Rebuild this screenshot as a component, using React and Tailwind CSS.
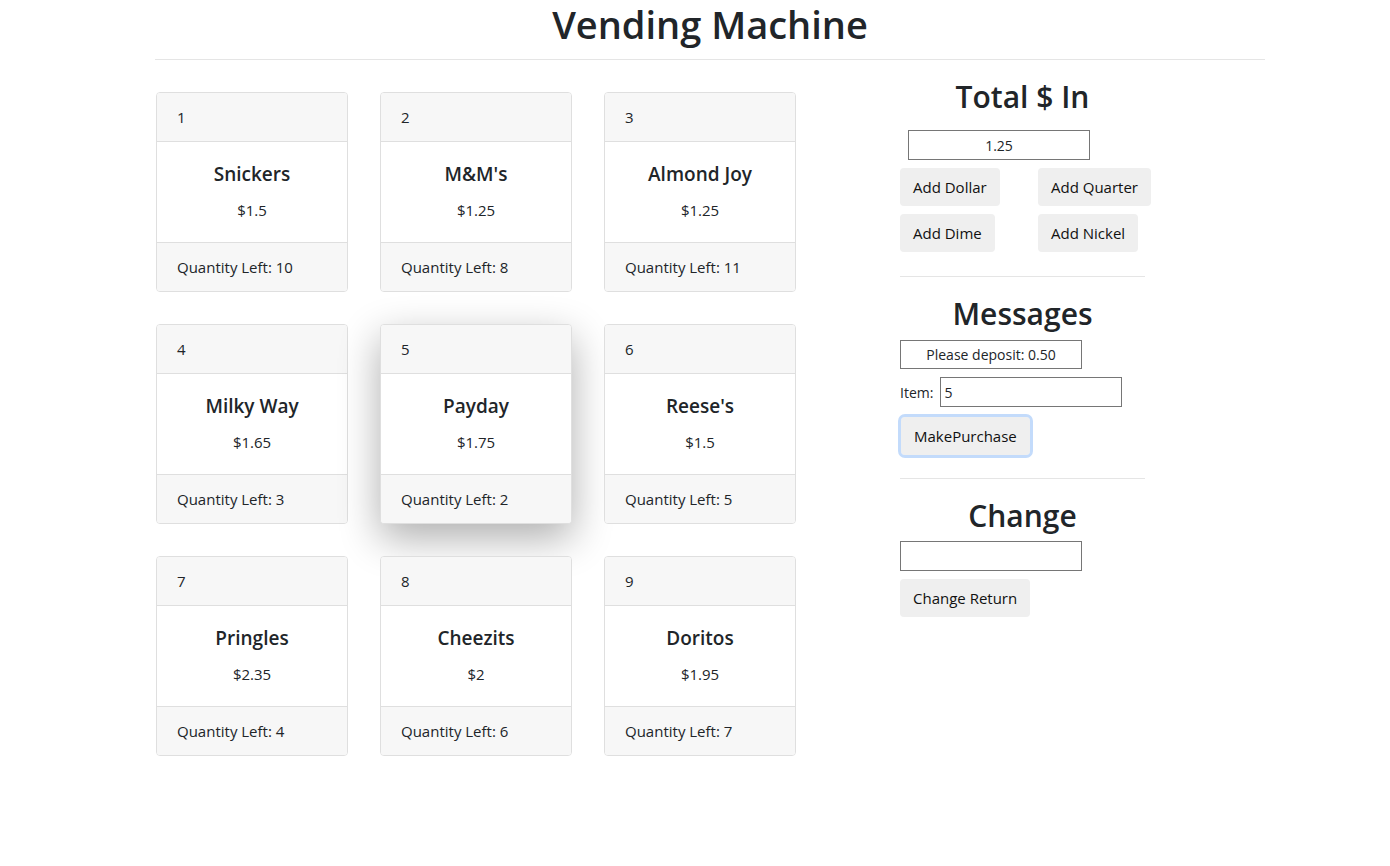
import React from "react";

const items = [
  { id: 1, name: "Snickers", price: "1.5", qty: 10 },
  { id: 2, name: "M&M's", price: "1.25", qty: 8 },
  { id: 3, name: "Almond Joy", price: "1.25", qty: 11 },
  { id: 4, name: "Milky Way", price: "1.65", qty: 3 },
  { id: 5, name: "Payday", price: "1.75", qty: 2 },
  { id: 6, name: "Reese's", price: "1.5", qty: 5 },
  { id: 7, name: "Pringles", price: "2.35", qty: 4 },
  { id: 8, name: "Cheezits", price: "2", qty: 6 },
  { id: 9, name: "Doritos", price: "1.95", qty: 7 },
];

function ItemCard({ item, hovered }) {
  return (
    <div
      className={
        "w-[192px] rounded-[4px] border border-[#dfdfdf] bg-white overflow-hidden " +
        (hovered ? "shadow-[0_14px_40px_rgba(0,0,0,0.32)]" : "")
      }
    >
      <div className="bg-[#f7f7f7] border-b border-[#dfdfdf] px-5 py-3 leading-6">{item.id}</div>
      <div className="px-5 py-5 text-center">
        <h5 className="text-[19px] font-semibold leading-6 mb-3">{item.name}</h5>
        <p className="leading-6">${item.price}</p>
      </div>
      <div className="bg-[#f7f7f7] border-t border-[#dfdfdf] px-5 py-3 leading-6">
        Quantity Left: {item.qty}
      </div>
    </div>
  );
}

function Btn({ children, focused }) {
  return (
    <button
      className={
        "h-[38px] px-[13px] rounded-[4px] bg-[#efefef] text-[#111] leading-6 whitespace-nowrap " +
        (focused ? "outline-[3px] outline outline-[#c3dbfb]" : "")
      }
    >
      {children}
    </button>
  );
}

export default function App() {
  return (
    <div
      className="min-h-screen bg-white text-[#212529] text-[15px]"
      style={{ fontFamily: '"Open Sans", "Noto Sans", sans-serif' }}
    >
      <div className="w-[1110px] ml-[155px]">
        <h1 className="text-[38px] font-semibold leading-[48px] text-center">Vending Machine</h1>
        <hr className="mt-[11px] border-t border-[#e5e5e5]" />
        <div className="flex mt-[32px]">
          <div className="w-[744px] grid grid-cols-[192px_192px_192px] gap-x-[32px] gap-y-[32px] content-start ml-[1px]">
            {items.map((it) => (
              <ItemCard key={it.id} item={it} hovered={it.id === 5} />
            ))}
          </div>
          <div className="w-[245px] -mt-[14px]">
            <h2 className="text-[30px] font-semibold leading-[38px] text-center">Total $ In</h2>
            <div className="mt-[14px] pl-[8px]">
              <input
                readOnly
                value="1.25"
                className="w-[182px] h-[30px] border border-[#767676] text-center text-[14px]"
              />
            </div>
            <div className="grid grid-cols-[138px_auto] gap-y-[8px] mt-[8px] justify-start">
              <div><Btn>Add Dollar</Btn></div>
              <div><Btn>Add Quarter</Btn></div>
              <div><Btn>Add Dime</Btn></div>
              <div><Btn>Add Nickel</Btn></div>
            </div>
            <hr className="mt-[24px] w-[245px] border-t border-[#e5e5e5]" />
            <h2 className="mt-[18px] text-[30px] font-semibold leading-[38px] text-center">Messages</h2>
            <input
              readOnly
              value="Please deposit: 0.50"
              className="mt-[7px] w-[182px] h-[29px] border border-[#767676] text-center text-[14px]"
            />
            <div className="flex items-center mt-[8px]">
              <span className="text-[14px] mr-[7px]">Item:</span>
              <input
                readOnly
                value="5"
                className="w-[182px] h-[30px] border border-[#767676] px-[3px] text-[14px]"
              />
            </div>
            <div className="mt-[10px] pl-[1px]">
              <Btn focused>MakePurchase</Btn>
            </div>
            <hr className="mt-[23px] w-[245px] border-t border-[#e5e5e5]" />
            <h2 className="mt-[18px] text-[30px] font-semibold leading-[38px] text-center">Change</h2>
            <input
              readOnly
              className="mt-[6px] w-[182px] h-[30px] border border-[#767676]"
            />
            <div className="mt-[8px]">
              <Btn>Change Return</Btn>
            </div>
          </div>
        </div>
      </div>
    </div>
  );
}
